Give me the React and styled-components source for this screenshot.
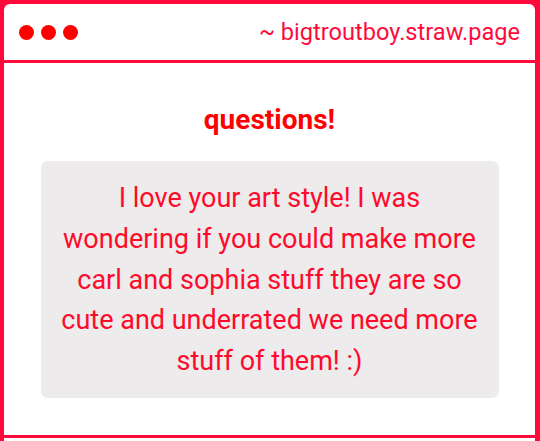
import React from "react";
import styled, { createGlobalStyle } from "styled-components";

const FRAME_RED = "#ff0b3b";
const TEXT_RED = "#ff0a2a";

const GlobalStyle = createGlobalStyle`
  html, body {
    margin: 0;
    padding: 0;
    background: ${FRAME_RED};
  }
  body {
    font-family: Roboto, "Liberation Sans", sans-serif;
    overflow: hidden;
  }
`;

const Window = styled.div`
  display: flex;
  flex-direction: column;
  gap: 3px;
  height: 441px;
  padding: 4px 5px 0 4px;
  box-sizing: border-box;
`;

const TitleBar = styled.header`
  display: flex;
  align-items: center;
  justify-content: space-between;
  height: 56px;
  padding: 0 15px;
  background: #fff;
  border-radius: 6px 6px 0 0;
`;

const Dots = styled.div`
  display: flex;
  gap: 7px;
`;

const Dot = styled.span`
  width: 15px;
  height: 15px;
  border-radius: 50%;
  background: #ff0000;
`;

const Url = styled.span`
  font-size: 23.6px;
  color: ${FRAME_RED};
`;

const Content = styled.main`
  display: flex;
  flex-direction: column;
  align-items: center;
  height: 372px;
  padding-top: 40px;
  box-sizing: border-box;
  background: #fff;
`;

const Title = styled.h2`
  margin: 0;
  font-size: 28px;
  font-weight: 700;
  line-height: normal;
  color: #ff0000;
`;

const Card = styled.div`
  margin-top: 25px;
  width: 458px;
  box-sizing: border-box;
  padding: 17px 12px 16px;
  background: #edebec;
  border-radius: 7px;
  text-align: center;
  font-size: 27px;
  line-height: 40.8px;
  white-space: nowrap;
  color: ${TEXT_RED};
`;

const Footer = styled.section`
  flex: 1;
  background: #fff;
`;

export default function App() {
  return (
    <>
      <GlobalStyle />
      <Window>
        <TitleBar>
          <Dots>
            <Dot />
            <Dot />
            <Dot />
          </Dots>
          <Url>~ bigtroutboy.straw.page</Url>
        </TitleBar>
        <Content>
          <Title>questions!</Title>
          <Card>
            I love your art style! I was
            <br />
            wondering if you could make more
            <br />
            carl and sophia stuff they are so
            <br />
            cute and underrated we need more
            <br />
            stuff of them! :)
          </Card>
        </Content>
        <Footer />
      </Window>
    </>
  );
}
